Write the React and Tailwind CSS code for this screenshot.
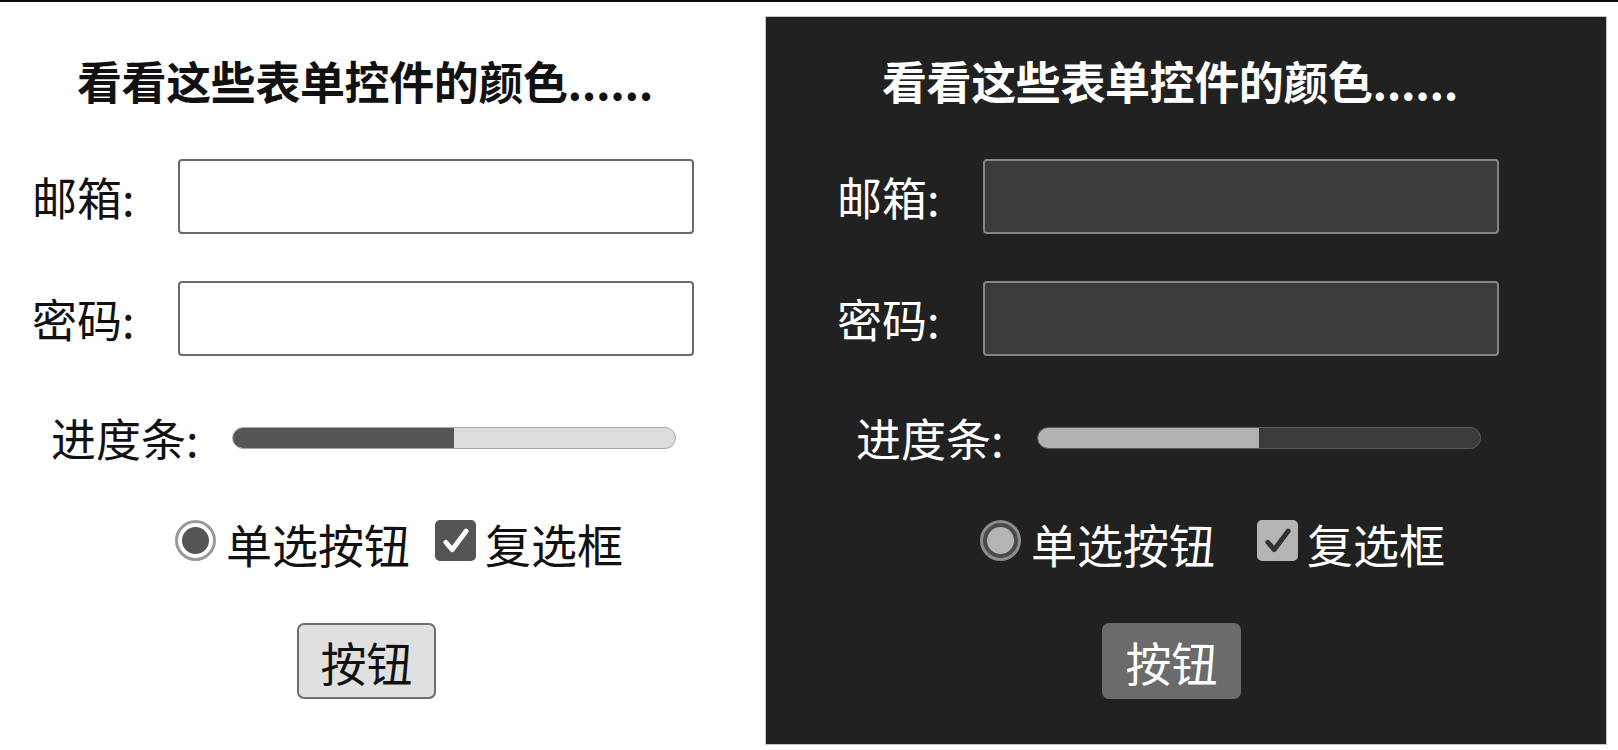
const Check = ({ color }) => (
  <svg viewBox="0 0 16 16" className="w-[34px] h-[34px]" fill="none" stroke={color} strokeWidth="2.3" strokeLinecap="round" strokeLinejoin="round">
    <path d="M3.2 8.6l3 3.5 6.6-8.8" />
  </svg>
);

const ColorForm = ({ dark }) => {
  const text = dark ? "text-white" : "text-[#111]";
  const field = dark
    ? "bg-[#3b3b3b] border-[#858585]"
    : "bg-white border-[#6a6a6a]";

  return (
    <div className={`flex flex-col ${text}`}>
      <h2 className="h-[45px] pl-[77px] text-[45px] leading-none font-bold tracking-[-0.4px] whitespace-nowrap">
        看看这些表单控件的颜色......
      </h2>

      <div className="mt-[56px] flex items-center h-[75px]">
        <label className="ml-[32px] w-[146px] shrink-0 text-[45px] leading-none">邮箱:</label>
        <input type="email" className={`w-[516px] h-[75px] rounded-[4px] border-2 outline-none ${field}`} />
      </div>

      <div className="mt-[47px] flex items-center h-[75px]">
        <label className="ml-[32px] w-[146px] shrink-0 text-[45px] leading-none">密码:</label>
        <input type="password" className={`w-[516px] h-[75px] rounded-[4px] border-2 outline-none ${field}`} />
      </div>

      <div className="mt-[59px] flex items-center h-[45px]">
        <span className="ml-[51px] w-[181px] shrink-0 text-[45px] leading-none">进度条:</span>
        <div
          className={`w-[444px] h-[22px] rounded-full border overflow-hidden flex ${
            dark ? "bg-[#3b3b3b] border-[#5a5a5a]" : "bg-[#dcdcdc] border-[#a8a8a8]"
          }`}
        >
          <div className={`w-1/2 h-full ${dark ? "bg-[#b2b2b2]" : "bg-[#555]"}`} />
        </div>
      </div>

      <div className="mt-[58px] flex items-center h-[45px]">
        <span
          className={`ml-[175px] w-[41px] h-[41px] shrink-0 rounded-full border-[3px] p-[4px] ${
            dark ? "border-[#8c8c8c] bg-[#4a4a4a]" : "border-[#9a9a9a] bg-white"
          }`}
        >
          <span className={`block w-full h-full rounded-full ${dark ? "bg-[#b4b4b4]" : "bg-[#555]"}`} />
        </span>
        <span className="ml-[10px] mt-[4px] w-[184px] shrink-0 text-[46px] leading-none whitespace-nowrap">单选按钮</span>
        <span
          className={`${dark ? "ml-[42px]" : "ml-[25px]"} w-[41px] h-[41px] shrink-0 rounded-[5px] flex items-center justify-center ${
            dark ? "bg-[#b4b4b4]" : "bg-[#555]"
          }`}
        >
          <Check color={dark ? "#333" : "#fff"} />
        </span>
        <span className="ml-[9px] mt-[4px] text-[46px] leading-none whitespace-nowrap">复选框</span>
      </div>

      <div className="mt-[60px] flex">
        <button
          className={`ml-[297px] w-[139px] h-[76px] rounded-[7px] text-[46px] leading-none ${
            dark ? "bg-[#6b6b6b] text-white" : "bg-[#e0e0e0] border-2 border-[#6e6e6e] text-[#111]"
          }`}
        >
          按钮
        </button>
      </div>
    </div>
  );
};

export default function App() {
  return (
    <div className="w-[1618px] h-[750px] overflow-hidden bg-white font-['Noto_Sans_CJK_SC','Noto_Sans',sans-serif]">
      <div className="h-[2px] bg-[#0c0c0c]" />
      <div className="flex">
        <div className="w-[765px] shrink-0 pt-[56px]">
          <ColorForm dark={false} />
        </div>
        <div className="mt-[14px] w-[842px] h-[729px] shrink-0 bg-[#212121] border border-[#c4c4c4] pt-[41px] pl-[39px]">
          <ColorForm dark />
        </div>
      </div>
    </div>
  );
}
